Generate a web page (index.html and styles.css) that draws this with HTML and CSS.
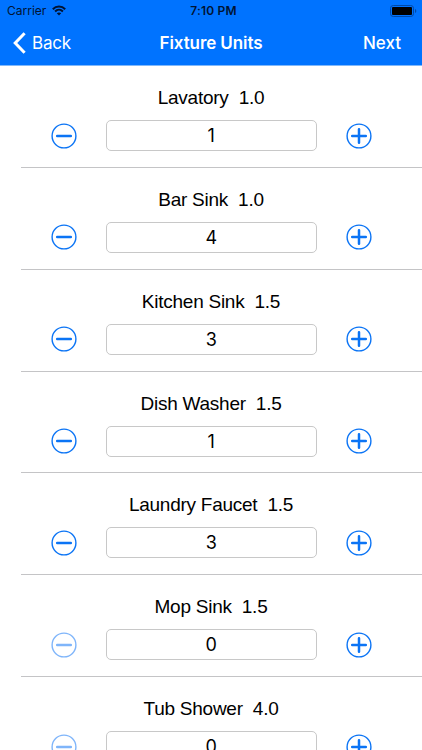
FILE: index.html
```html
<!DOCTYPE html>
<html lang="en">
<head>
  <meta charset="UTF-8" />
  <meta name="viewport" content="width=device-width, initial-scale=1.0"/>
  <title>Fixture Units</title>
  <link rel="stylesheet" href="styles.css">
</head>
<body>
  <!-- icons used in every row -->
  <svg class="sprite" width="0" height="0">
    <symbol id="minus" viewBox="0 0 26 26">
      <circle cx="13" cy="13" r="11.9" fill="none" stroke="currentColor" stroke-width="1.4"/>
      <path d="M6.2 13h13.6" stroke="currentColor" stroke-width="2.5" stroke-linecap="round"/>
    </symbol>
    <symbol id="plus" viewBox="0 0 26 26">
      <circle cx="13" cy="13" r="11.9" fill="none" stroke="currentColor" stroke-width="1.4"/>
      <path d="M6.2 13h13.6M13 6.2v13.6" stroke="currentColor" stroke-width="2.5" stroke-linecap="round"/>
    </symbol>
  </svg>

  <header>
    <div class="status">
      <div class="carrier">
        <span class="carrier-name">Carrier</span>
        <svg width="14" height="11" viewBox="0 0 14 11" fill="none" stroke="#001433" stroke-width="2">
          <path d="M.8 4.2C4.3.7 9.7.7 13.2 4.2"/>
          <path d="M3.1 6.5c2.2-2.2 5.6-2.2 7.8 0"/>
          <path d="M4.8 8.3c1.2-1.2 3.2-1.2 4.4 0L7 10.6z" fill="#001433" stroke="none"/>
        </svg>
      </div>
      <div class="time">7:10 PM</div>
      <svg class="battery" width="27" height="12" viewBox="0 0 27 12">
        <rect x=".5" y=".5" width="23" height="11" rx="2.8" fill="none" stroke="#0049a6"/>
        <rect x="2" y="2" width="20" height="8" rx="1" fill="#000"/>
        <path d="M25 4c1.8.6 1.8 3.4 0 4z" fill="#0049a6"/>
      </svg>
    </div>
    <nav>
      <a class="back">
        <svg width="13" height="22" viewBox="0 0 13 22">
          <path d="M11.6 1.2 2.2 11l9.4 9.8" fill="none" stroke="#fff" stroke-width="3"/>
        </svg>
        <span class="back-text">Back</span>
      </a>
      <h1><span class="title">Fixture Units</span></h1>
      <a class="next"><span class="next-text">Next</span></a>
    </nav>
  </header>

  <main>
    <div class="row">
      <p class="name">Lavatory&nbsp; 1.0</p>
      <div class="stepper">
        <button><svg><use href="#minus"/></svg></button>
        <div class="count">1</div>
        <button><svg><use href="#plus"/></svg></button>
      </div>
    </div>
    <div class="row">
      <p class="name">Bar Sink&nbsp; 1.0</p>
      <div class="stepper">
        <button><svg><use href="#minus"/></svg></button>
        <div class="count">4</div>
        <button><svg><use href="#plus"/></svg></button>
      </div>
    </div>
    <div class="row">
      <p class="name">Kitchen Sink&nbsp; 1.5</p>
      <div class="stepper">
        <button><svg><use href="#minus"/></svg></button>
        <div class="count">3</div>
        <button><svg><use href="#plus"/></svg></button>
      </div>
    </div>
    <div class="row">
      <p class="name">Dish Washer&nbsp; 1.5</p>
      <div class="stepper">
        <button><svg><use href="#minus"/></svg></button>
        <div class="count">1</div>
        <button><svg><use href="#plus"/></svg></button>
      </div>
    </div>
    <div class="row">
      <p class="name">Laundry Faucet&nbsp; 1.5</p>
      <div class="stepper">
        <button><svg><use href="#minus"/></svg></button>
        <div class="count">3</div>
        <button><svg><use href="#plus"/></svg></button>
      </div>
    </div>
    <div class="row">
      <p class="name">Mop Sink&nbsp; 1.5</p>
      <div class="stepper">
        <button disabled><svg><use href="#minus"/></svg></button>
        <div class="count">0</div>
        <button><svg><use href="#plus"/></svg></button>
      </div>
    </div>
    <div class="row">
      <p class="name">Tub Shower&nbsp; 4.0</p>
      <div class="stepper">
        <button disabled><svg><use href="#minus"/></svg></button>
        <div class="count">0</div>
        <button><svg><use href="#plus"/></svg></button>
      </div>
    </div>
  </main>
</body>
</html>
```

FILE: styles.css
```css
*, *::before, *::after {
  box-sizing: border-box;
}

* {
  margin: 0;
}

body {
  height: 750px;
  overflow: hidden;
  background: #fff;
  color: #000;
  font-family: 'Liberation Sans', Arial, sans-serif;
}

svg {
  display: block;
}

.sprite {
  position: absolute;
}

header {
  height: 66px;
  background: #0073ff;
  border-bottom: 1px solid #80b8fa;
  font-family: Inter, sans-serif;
}

/* status bar */
.status {
  display: grid;
  grid-template-columns: 1fr auto 1fr;
  align-items: center;
  height: 21px;
  padding: 0 5px 0 7px;
  color: #001433;
}

.carrier {
  display: flex;
  align-items: center;
  gap: 6px;
  font-size: 12px;
}

.time {
  margin-left: 3px;
  font-size: 12px;
  font-weight: 600;
  letter-spacing: 0.2px;
}

.battery {
  justify-self: end;
}

/* navigation bar */
nav {
  display: grid;
  grid-template-columns: 1fr auto 1fr;
  align-items: center;
  height: 44px;
  padding: 0 21px;
  color: #fff;
  font-size: 17px;
  line-height: 22px;
}

.back {
  display: flex;
  align-items: center;
  gap: 6px;
  margin-left: -8px;
  letter-spacing: -0.2px;
}

h1 {
  font-size: 17px;
  font-weight: 600;
  letter-spacing: -0.1px;
}

.next {
  justify-self: end;
  font-weight: 500;
}

/* fixture list */
.row {
  height: 101.85px;
  margin-left: 21px;
  padding: 20px 21px 0 0;
  border-bottom: 1px solid #c4c4c6;
}

.name {
  font-size: 19px;
  line-height: 24px;
  letter-spacing: -0.25px;
  text-align: center;
  white-space: nowrap;
}

.stepper {
  display: flex;
  align-items: center;
  justify-content: space-between;
  padding: 0 29.5px 0 30px;
  margin-top: 10px;
}

button {
  padding: 0;
  border: none;
  background: none;
  color: #0b74f5;
}

button:disabled {
  color: #7fb5fa;
}

button svg {
  width: 26px;
  height: 26px;
}

.count {
  width: 211px;
  height: 31px;
  border: 1px solid #c8c8c8;
  border-radius: 5px;
  font-family: Inter, sans-serif;
  font-size: 18px;
  line-height: 30px;
  text-align: center;
}
```
